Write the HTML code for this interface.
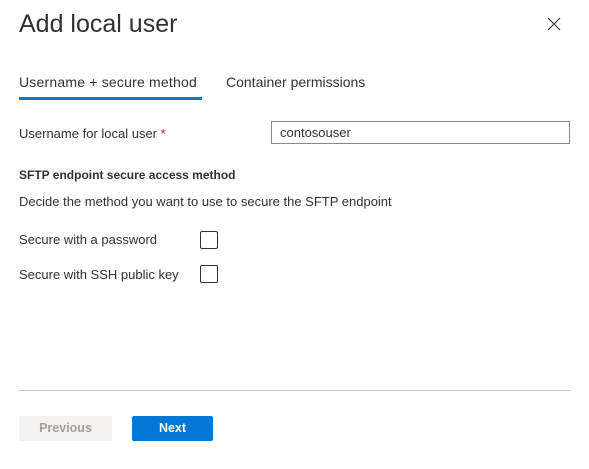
<!DOCTYPE html>
<html><head><style>
body{margin:0;width:589px;height:469px;background:#fff;font-family:"Liberation Sans",sans-serif;color:#323130;position:relative;overflow:hidden}
.a{position:absolute;white-space:nowrap}
</style></head><body>
<div class="a" style="left:19px;top:10px;font-size:25px;color:#323130">Add local user</div>
<svg class="a" style="left:547px;top:17px" width="14" height="14" viewBox="0 0 14 14"><path d="M1 1L13 13M13 1L1 13" stroke="#323130" stroke-width="1.2"/></svg>
<div class="a" style="left:19px;top:74px;font-size:14px;letter-spacing:0.2px">Username + secure method</div>
<div class="a" style="left:19px;top:97px;width:183px;height:3px;background:#0078d4"></div>
<div class="a" style="left:226px;top:74px;font-size:14px">Container permissions</div>
<div class="a" style="left:19px;top:126px;font-size:13px">Username for local user <span style="color:#a4262c">*</span></div>
<div class="a" style="left:271px;top:121px;width:299px;height:23px;border:1px solid #8a8886;box-sizing:border-box;font-size:13px;padding:3px 0 0 8px">contosouser</div>
<div class="a" style="left:19px;top:168px;font-size:12px;font-weight:bold">SFTP endpoint secure access method</div>
<div class="a" style="left:19px;top:194px;font-size:13px">Decide the method you want to use to secure the SFTP endpoint</div>
<div class="a" style="left:19px;top:232px;font-size:13px">Secure with a password</div>
<div class="a" style="left:200px;top:231px;width:18px;height:18px;border:1px solid #323130;border-radius:2px;box-sizing:border-box"></div>
<div class="a" style="left:19px;top:267px;font-size:13px">Secure with SSH public key</div>
<div class="a" style="left:200px;top:265px;width:18px;height:18px;border:1px solid #323130;border-radius:2px;box-sizing:border-box"></div>
<div class="a" style="left:19px;top:390px;width:551px;height:1px;background:#c8c6c4"></div>
<div class="a" style="left:19px;top:416px;width:93px;height:25px;background:#f3f2f1;border-radius:2px;color:#a19f9d;font-size:12.5px;font-weight:bold;text-align:center;line-height:25px">Previous</div>
<div class="a" style="left:132px;top:416px;width:81px;height:25px;background:#0078d4;border-radius:2px;color:#fff;font-size:12.5px;font-weight:bold;text-align:center;line-height:25px">Next</div>
</body></html>
